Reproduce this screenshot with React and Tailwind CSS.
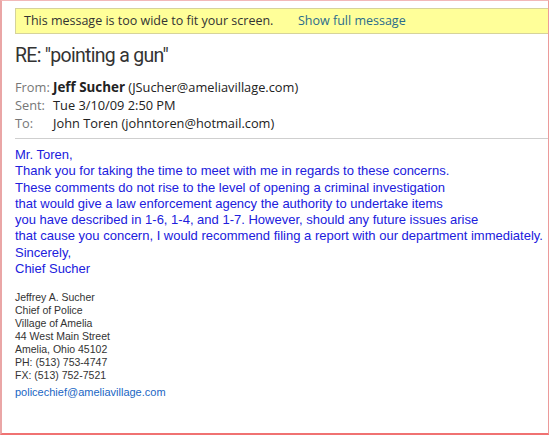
export default function App() {
  const seg = { fontFamily: '"Open Sans", "Noto Sans", sans-serif' };
  const rob = { fontFamily: 'Roboto, "Noto Sans", sans-serif' };
  const arial = { fontFamily: '"Liberation Sans", Arial, sans-serif' };
  return (
    <div className="w-[550px] h-[435px] bg-white overflow-hidden">
      <div className="w-[549px] h-[435px] border-t border-t-[#f2b8b8] border-l-2 border-l-[#eaa6a6] border-r border-r-[#ec9a9a] border-b-2 border-b-[#f07272] overflow-hidden">
        <div className="pl-[13px] pt-[7px]">
          <div className="h-[26px] flex items-center bg-[#ffff99] border border-[#d6d39a] border-r-0 text-[12.5px] text-[#333]" style={seg}>
            <span className="pl-[8px] w-[282px]">This message is too wide to fit your screen.</span>
            <span className="text-[#2b6c8c]">Show full message</span>
          </div>
          <div className="mt-[9px] text-[19.5px] leading-[26px] tracking-[-0.7px] text-[#333]" style={rob}>RE: "pointing a gun"</div>
          <div className="mt-[9px] text-[12.8px] leading-[18px] text-[#222]" style={seg}>
            <div className="flex"><span className="w-[38px] text-[#777]">From:</span><span><b className="text-[13.4px]">Jeff Sucher</b> (JSucher@ameliavillage.com)</span></div>
            <div className="flex"><span className="w-[38px] text-[#777]">Sent:</span><span>Tue 3/10/09 2:50 PM</span></div>
            <div className="flex"><span className="w-[38px] text-[#777]">To:</span><span>John Toren (johntoren@hotmail.com)</span></div>
          </div>
          <div className="mt-[6px] border-t border-[#cfcfcf]"></div>
          <div className="mt-[8px] text-[13px] leading-[16.3px] text-[#2020dd]" style={arial}>
            <div>Mr. Toren,</div>
            <div>Thank you for taking the time to meet with me in regards to these concerns.</div>
            <div>These comments do not rise to the level of opening a criminal investigation</div>
            <div>that would give a law enforcement agency the authority to undertake items</div>
            <div>you have described in 1-6, 1-4, and 1-7. However, should any future issues arise</div>
            <div>that cause you concern, I would recommend filing a report with our department immediately.</div>
            <div>Sincerely,</div>
            <div>Chief Sucher</div>
          </div>
          <div className="mt-[14px] text-[10.5px] leading-[13px] text-[#333]" style={arial}>
            <div>Jeffrey A. Sucher</div>
            <div>Chief of Police</div>
            <div>Village of Amelia</div>
            <div>44 West Main Street</div>
            <div>Amelia, Ohio 45102</div>
            <div>PH: (513) 753-4747</div>
            <div>FX: (513) 752-7521</div>
            <div className="mt-[4px] text-[11px] text-[#1a66c4]">policechief@ameliavillage.com</div>
          </div>
        </div>
      </div>
    </div>
  );
}
